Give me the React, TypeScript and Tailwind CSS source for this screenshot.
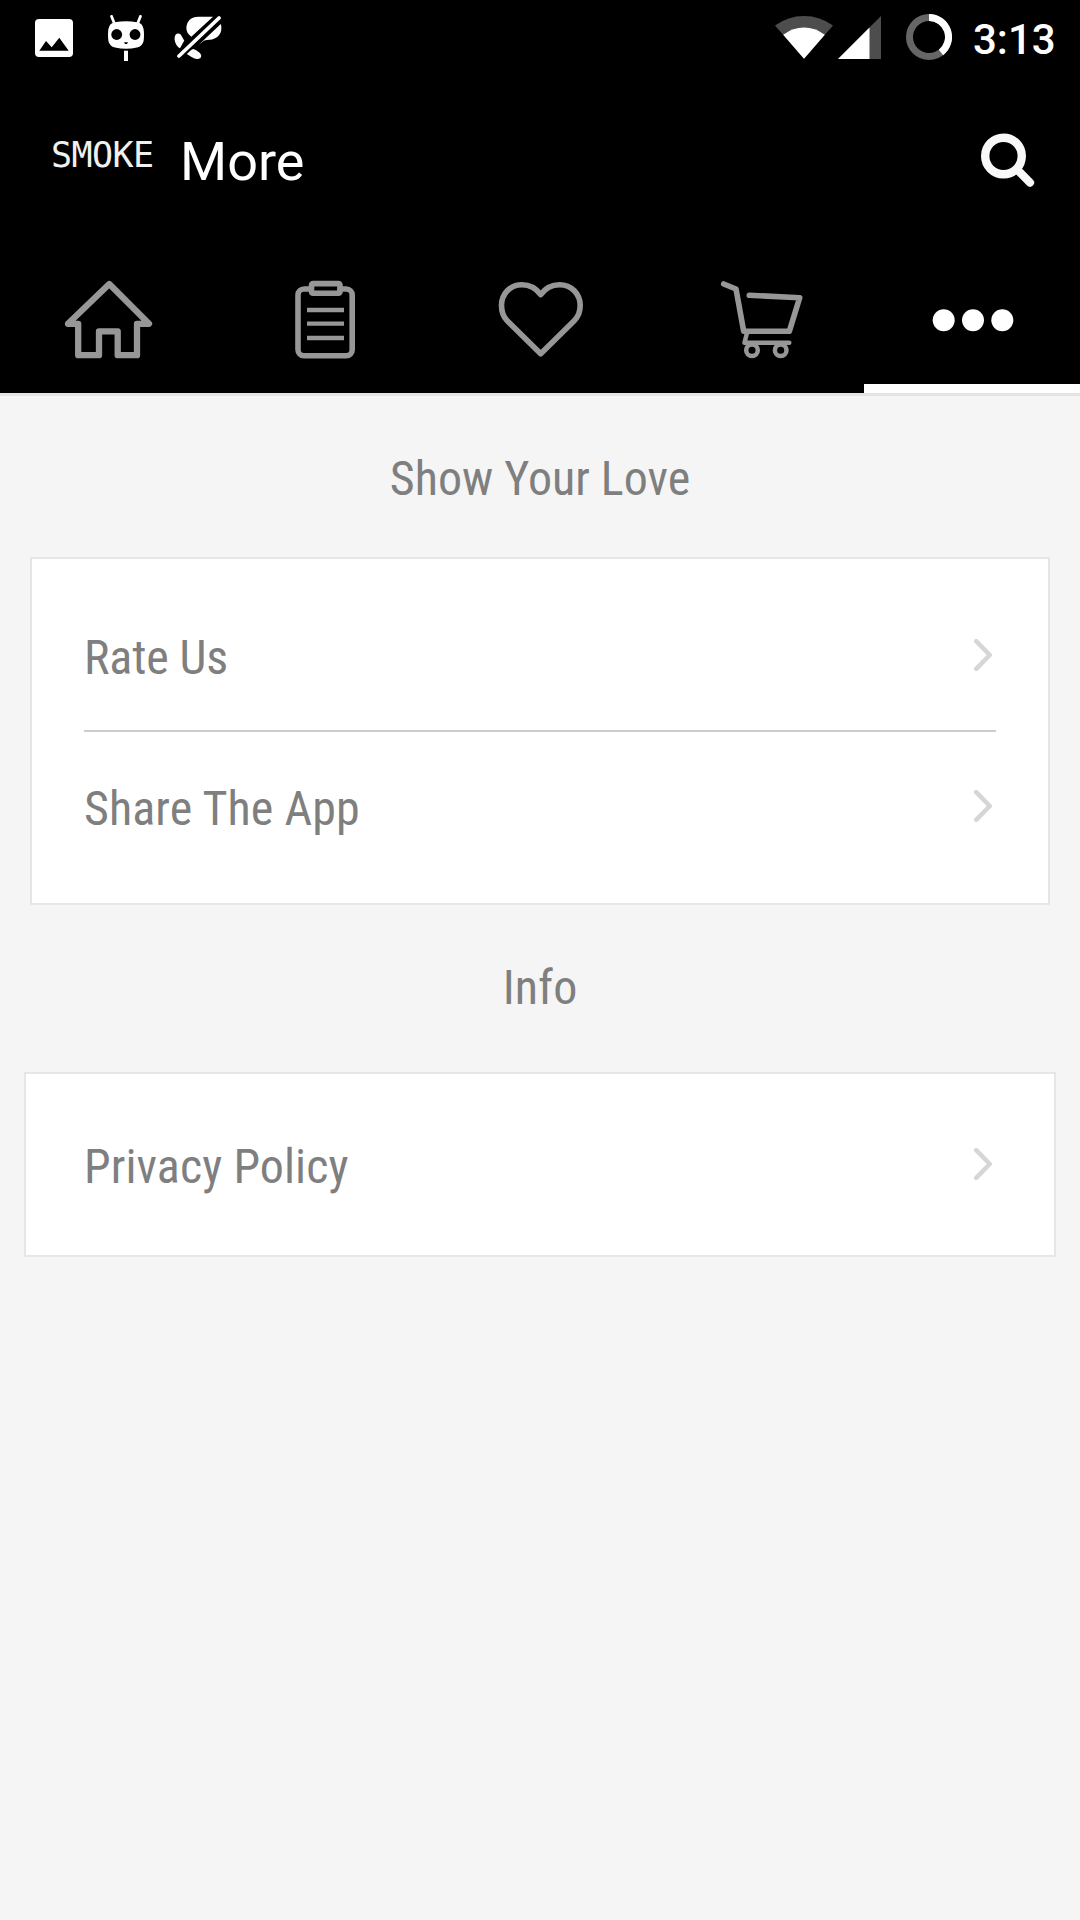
import type { ReactNode } from 'react';
import { clsx } from 'clsx';

const ROBOTO = "font-['Roboto',sans-serif]";
const CONDENSED = "font-['Roboto_Condensed','Roboto',sans-serif] [font-stretch:75%]";

function StatusBar() {
  return (
    <div className="h-[72px] flex items-start text-white">
      {/* Picture notification */}
      <svg className="ml-[35px] mt-[19px]" width="38" height="38" viewBox="0 0 38 38">
        <rect width="38" height="38" rx="4" fill="#fff" />
        <path d="M4.3 31.7 11 22l5.7 6.3 7.6-9.6 9.4 13z" fill="#000" />
      </svg>

      {/* Cid mascot */}
      <svg className="ml-[35px] mt-[15px]" width="36" height="46" viewBox="0 0 36 46">
        <path d="M3.6 1.4 6 7.5M32.4 1.4 30 7.5" stroke="#fff" strokeWidth="2.8" strokeLinecap="round" />
        <path d="M7 7.2Q18 5.4 29 7.2 34.5 8 35.6 14 36.4 20 35.6 26 34.5 31.3 29 32.6 18 35 7 32.6 1.5 31.3.4 26-.4 20 .4 14 1.5 8 7 7.2z" fill="#fff" />
        <circle cx="8.7" cy="19.5" r="5.4" fill="#000" />
        <circle cx="27" cy="19.5" r="5.4" fill="#000" />
        <path d="M16 27.3h4l-1 1.8h-2z" fill="#000" />
        <path d="M16 35.7h4V46h-4z" fill="#fff" />
      </svg>

      {/* Muted balloon */}
      <svg className="ml-[30px] mt-4" width="49" height="44" viewBox="0 0 49 44">
        <g fill="#fff">
          <path d="M39 .8 17.3 20.7C13.5 18 12.3 15 12.4 11.5 12.6 5.5 17 .8 24.5 .8z" />
          <path d="M46.8 8C48.3 13 47.5 21 38 23.4 34.5 24 31.5 23.5 29.5 25L24.5 29z" />
          <path d="M4.3 17.5C7 17.5 8 21 10.3 24.5L6 32.3C2.5 30.5.5 26 .6 22.3.7 19.5 2 17.5 4.3 17.5z" />
          <path d="M13.7 34.8 19.5 33C22 34 27 37 27.2 39.5 27.2 42 26 43 22.5 43 19 42.5 16 40 12.8 38z" />
        </g>
        <path d="M4 40.8 45.3 1.8" stroke="#000" strokeWidth="8" />
        <path d="M5 40 45 2" stroke="#fff" strokeWidth="3.7" strokeLinecap="round" />
      </svg>

      <div className="flex-1" />

      {/* Wi-Fi */}
      <svg className="mt-4" width="58" height="43" viewBox="0 0 58 43">
        <path d="M0 9.5Q13 0 29 0t29 9.5L29 42.7z" fill="#4d4d4d" />
        <path d="M8.2 18.7Q18 11.6 29 11.6t20.8 7.1L29 42.7z" fill="#fff" />
      </svg>
      {/* Cell signal */}
      <svg className="ml-[5px] mt-4" width="43" height="43" viewBox="0 0 43 43">
        <path d="M43 0v43H0z" fill="#4d4d4d" />
        <path d="M31.5 11.5V43H0z" fill="#fff" />
      </svg>
      {/* Battery ring */}
      <svg className="ml-[25px] mt-[14px]" width="46" height="46" viewBox="0 0 46 46" fill="none" strokeWidth="7">
        <circle cx="23" cy="23" r="19.5" stroke="#666" />
        <path d="M23 3.5A19.5 19.5 0 0 1 35 38.4" stroke="#fff" />
      </svg>
      <span className={clsx(ROBOTO, 'w-[83px] ml-[21px] mr-[24px] mt-[15px] text-[42px] leading-[49px] font-medium whitespace-nowrap')}>
        3:13
      </span>
    </div>
  );
}

function Toolbar() {
  return (
    <div className="h-[168px] flex items-start text-white">
      <span className="w-[105px] ml-[51px] mt-[63px] font-['DejaVu_Sans_Mono',monospace] text-[35px] tracking-[-0.6px] leading-10 text-[#f0f0f0] whitespace-nowrap">
        SMOKE
      </span>
      <h1 className={clsx(ROBOTO, 'ml-[24px] mt-[58px] text-[54px] leading-[64px] font-normal')}>More</h1>
      <div className="flex-1" />
      <button aria-label="Search" className="mr-[45px] mt-[61px]">
        <svg width="54" height="54" viewBox="0 0 54 54" fill="none" stroke="#f8f8f8">
          <circle cx="22.5" cy="23" r="18.3" strokeWidth="8.4" />
          <path d="M36 36.5 49 49.6" strokeWidth="8.2" strokeLinecap="round" />
        </svg>
      </button>
    </div>
  );
}

function Tab({ label, active, children }: { label: string; active?: boolean; children: ReactNode }) {
  return (
    <button
      aria-label={label}
      className={clsx('h-[153px] flex-1 flex justify-center pt-10 border-b-[9px]', active ? 'border-white' : 'border-black')}
    >
      <svg
        className="overflow-visible"
        width="90"
        height="80"
        viewBox="0 0 90 80"
        fill="none"
        stroke="#979797"
        strokeWidth="5.6"
        strokeLinecap="round"
        strokeLinejoin="round"
      >
        {children}
      </svg>
    </button>
  );
}

function Tabs() {
  return (
    <nav className="flex">
      <Tab label="Home">
        <path strokeWidth="6.3" d="M46.3 4 86 43.8H74V75.2H54.7V51.3H36V75.2H15.2V43.8H5z" />
      </Tab>
      <Tab label="Orders">
        <path d="M32.3 9H25a6 6 0 0 0-6 6V69.7a6 6 0 0 0 6 6H67.2a6 6 0 0 0 6-6V15a6 6 0 0 0-6-6H61" />
        <rect x="32.5" y="3.6" width="28.5" height="9.7" rx="1.5" />
        <path d="M28 30H65M28 43.7H65M28 58H65" strokeWidth="4.3" strokeLinecap="butt" />
      </Tab>
      <Tab label="Favourites">
        <path d="M45.7 14.6C41 8 35 4.7 27 4.7 15 4.7 6.5 14 6.5 25.5 6.5 32 8.5 37 12.2 40.7L45.7 73.7 79.2 40.7C82.9 37 85.2 32 85.2 25.5 85.2 14 76.5 4.7 64.5 4.7 56.5 4.7 50.4 8 45.7 14.6z" />
      </Tab>
      <Tab label="Cart">
        <path d="M12.7 4 25 9 32.7 51.3H78.3L88.7 17.7 38.3 15.3" />
        <path d="M35.7 54 33.5 62.7H78.3" strokeWidth="4.5" />
        <circle cx="41" cy="70.3" r="5.8" strokeWidth="4.5" />
        <circle cx="69.7" cy="70.3" r="5.8" strokeWidth="4.5" />
      </Tab>
      <Tab label="More" active>
        <g fill="#fff" stroke="none">
          <circle cx="16.7" cy="40.2" r="11" />
          <circle cx="46" cy="40.2" r="11" />
          <circle cx="75.3" cy="40.2" r="11" />
        </g>
      </Tab>
    </nav>
  );
}

function SectionTitle({ children }: { children: ReactNode }) {
  return <h2 className={clsx(CONDENSED, 'text-center text-[48px] leading-[56px] font-normal')}>{children}</h2>;
}

function Row({ label, tracking }: { label: string; tracking?: string }) {
  return (
    <button className="w-full h-[148px] flex items-center justify-between text-left">
      <span className={clsx(CONDENSED, 'text-[48px] leading-[56px] pt-1.5', tracking)}>{label}</span>
      <svg className="mr-1" width="18" height="32" viewBox="0 0 18 32" fill="none" stroke="#d6d6d6" strokeWidth="4.5" strokeLinecap="round" strokeLinejoin="round">
        <path d="M2.2 2.2 15.8 16 2.2 29.8" />
      </svg>
    </button>
  );
}

export default function App() {
  return (
    <div className="w-[1080px] h-[1920px] overflow-hidden bg-[#f5f5f5] text-[#7f7f7f]">
      <header className="bg-black">
        <StatusBar />
        <Toolbar />
        <Tabs />
      </header>
      <main className="border-t-[3px] border-[#e4e4e4]">
        <div className="h-[161px] pt-[55px]">
          <SectionTitle>Show Your Love</SectionTitle>
        </div>
        <section className="mx-[30px] px-[52px] pt-[22px] pb-[23px] bg-white border-2 border-[#e6e6e6]">
          <Row label="Rate Us" tracking="tracking-[-0.15px]" />
          <div className="mt-px h-0.5 bg-[#ccc]" />
          <Row label="Share The App" tracking="tracking-[0.1px]" />
        </section>
        <div className="h-[167px] pt-[55px]">
          <SectionTitle>Info</SectionTitle>
        </div>
        <section className="mx-6 px-[58px] pt-4 pb-[17px] bg-white border-2 border-[#e6e6e6]">
          <Row label="Privacy Policy" tracking="tracking-[0.1px]" />
        </section>
      </main>
    </div>
  );
}
